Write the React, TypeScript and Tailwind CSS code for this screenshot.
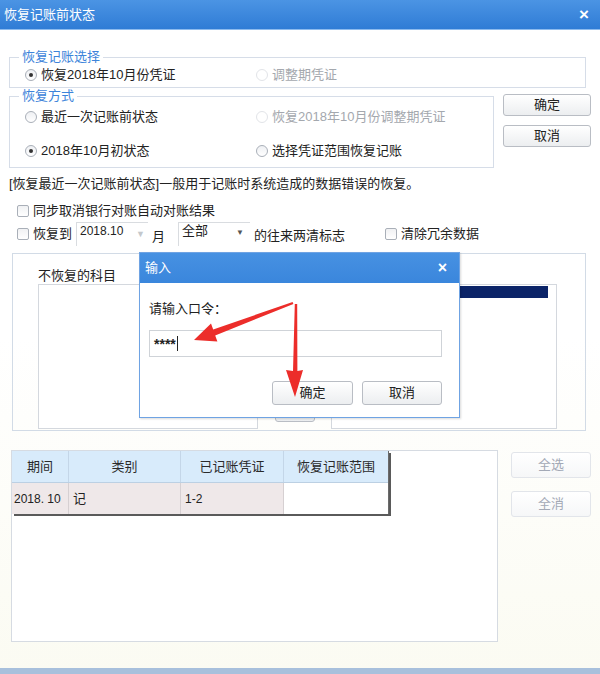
import React from "react";

function Radio({ checked, disabled, label }: { checked?: boolean; disabled?: boolean; label: string }) {
  return (
    <div className="flex items-center gap-[4px] h-[20px]">
      <span
        className={`w-[12px] h-[12px] rounded-full border flex items-center justify-center ${
          disabled ? "border-[#e2e4e8] bg-white" : "border-[#a9afb8] bg-gradient-to-b from-[#eef0f3] to-white"
        }`}
      >
        {checked && <span className="w-[4px] h-[4px] rounded-full bg-[#333]" />}
      </span>
      <span className={disabled ? "text-[#a4a8ae]" : "text-[#222]"}>{label}</span>
    </div>
  );
}

function Check({ label }: { label?: string }) {
  return (
    <div className="flex items-center gap-[4px]">
      <span className="w-[12px] h-[12px] rounded-[2px] border border-[#a9afb8] bg-gradient-to-b from-[#f0f1f3] to-white" />
      {label && <span>{label}</span>}
    </div>
  );
}

function Btn({ children, className = "" }: { children: React.ReactNode; className?: string }) {
  return (
    <div
      className={`flex items-center justify-center rounded-[3px] border border-[#b9bdc4] bg-gradient-to-b from-white to-[#eceef0] text-[#222] ${className}`}
    >
      {children}
    </div>
  );
}

export default function App() {
  return (
    <div className="relative w-[600px] h-[674px] overflow-hidden flex flex-col bg-gradient-to-b from-white via-white to-[#fbfbf2] text-[13px] leading-[18px] text-[#222] font-['Liberation_Sans','Noto_Sans_CJK_SC',sans-serif]">
      {/* title bar */}
      <div className="h-[30px] shrink-0 flex items-center justify-between pl-[4px] pr-[11px] bg-gradient-to-b from-[#4b94e4] to-[#2f7cd5] border-b border-[#8dbbee] text-white">
        <span>恢复记账前状态</span>
        <span className="text-[17px] font-bold">×</span>
      </div>

      <div className="flex-1 flex flex-col px-[9px]">
        {/* 恢复记账选择 */}
        <fieldset className="mt-[19px] w-[577px] border border-[#d6dde8] pb-[2px]">
          <legend className="ml-[9px] px-[3px] leading-[16px] text-[#3d84da]">恢复记账选择</legend>
          <div className="grid grid-cols-[231px_1fr] pl-[15px]">
            <Radio checked label="恢复2018年10月份凭证" />
            <Radio disabled label="调整期凭证" />
          </div>
        </fieldset>

        <div className="flex items-start">
          <fieldset className="w-[485px] border border-[#d6dde8] pt-[3px] pb-[6px]">
            <legend className="ml-[9px] px-[3px] leading-[16px] text-[#3d84da]">恢复方式</legend>
            <div className="grid grid-cols-[231px_1fr] gap-y-[14px] pl-[15px]">
              <Radio label="最近一次记账前状态" />
              <Radio disabled label="恢复2018年10月份调整期凭证" />
              <Radio checked label="2018年10月初状态" />
              <Radio label="选择凭证范围恢复记账" />
            </div>
          </fieldset>
          <div className="ml-[9px] mt-[6px] flex flex-col gap-[9px]">
            <Btn className="w-[88px] h-[22px]">确定</Btn>
            <Btn className="w-[88px] h-[22px]">取消</Btn>
          </div>
        </div>

        <div className="mt-[7px]">[恢复最近一次记账前状态]一般用于记账时系统造成的数据错误的恢复。</div>

        <div className="mt-[9px] pl-[8px]">
          <Check label="同步取消银行对账自动对账结果" />
        </div>

        <div className="mt-[2px] pl-[8px] flex items-center h-[24px]">
          <Check label="恢复到" />
          <div className="ml-[4px] w-[72px] h-[24px] border-l border-t border-[#d9dce0] bg-white flex justify-between px-[3px] text-[12px] leading-[16px]">
            <span>2018.10</span>
            <span className="text-[#c4c8cc] text-[9px] mt-[3px]">▼</span>
          </div>
          <span className="ml-[4px] mt-[6px]">月</span>
          <div className="ml-[13px] w-[72px] h-[24px] border-l border-t border-[#d9dce0] bg-white flex justify-between px-[3px] leading-[16px]">
            <span>全部</span>
            <span className="text-[#555] text-[8px] mt-[2px] mr-[3px]">▼</span>
          </div>
          <span className="ml-[4px] mt-[4px]">的往来两清标志</span>
          <div className="ml-[40px]">
            <Check label="清除冗余数据" />
          </div>
        </div>

        {/* subjects panel */}
        <div className="mt-[7px] ml-[3px] w-[574px] h-[178px] border border-[#d2dbe6] flex pl-[25px] pt-[13px]">
          <div className="flex flex-col">
            <span className="leading-[17px]">不恢复的科目</span>
            <div className="w-[220px] h-[145px] border border-[#d4d8de] bg-white" />
          </div>
          <div className="w-[73px] flex flex-col justify-end items-center pb-[8px]">
            <Btn className="w-[40px] h-[24px]"> </Btn>
          </div>
          <div className="flex flex-col">
            <span className="leading-[17px]">恢复的科目</span>
            <div className="w-[226px] h-[145px] border border-[#d4d8de] bg-white pt-[1px] pl-[1px] pr-[8px]">
              <div className="h-[12px] bg-[#0b2468]" />
            </div>
          </div>
        </div>

        {/* table section */}
        <div className="mt-[19px] flex items-start">
          <div className="ml-[2px] w-[487px] h-[192px] border border-[#d6dbe2] bg-white">
            <div className="w-[377px] shadow-[2px_2px_0_#5a5a5a] border-r border-[#6b6b6b]">
              <div className="grid grid-cols-[57px_112px_103px_104px] h-[32px] bg-[#d8ebfb] border-b border-[#bcd0e3] text-[#2a2a2a]">
                <div className="flex items-center justify-center border-r border-[#c4d6e8]">期间</div>
                <div className="flex items-center justify-center border-r border-[#c4d6e8]">类别</div>
                <div className="flex items-center justify-center border-r border-[#c4d6e8]">已记账凭证</div>
                <div className="flex items-center justify-center">恢复记账范围</div>
              </div>
              <div className="grid grid-cols-[57px_112px_103px_104px] h-[31px] text-[12px]">
                <div className="flex items-center pl-[2px] bg-[#efe8e9] border-r border-[#d6d0d2] whitespace-nowrap">2018. 10</div>
                <div className="flex items-center pl-[4px] bg-[#efe8e9] border-r border-[#d6d0d2] text-[13px]">记</div>
                <div className="flex items-center pl-[4px] bg-[#efe8e9] border-r border-[#d6d0d2]">1-2</div>
                <div className="bg-white" />
              </div>
            </div>
          </div>
          <div className="ml-[13px] mt-[2px] flex flex-col gap-[13px]">
            <div className="w-[80px] h-[26px] rounded-[3px] border border-[#e2e5ea] bg-gradient-to-b from-white to-[#f6f7f8] flex items-center justify-center text-[#a3a9b6]">全选</div>
            <div className="w-[80px] h-[26px] rounded-[3px] border border-[#e2e5ea] bg-gradient-to-b from-white to-[#f6f7f8] flex items-center justify-center text-[#a3a9b6]">全消</div>
          </div>
        </div>
      </div>

      <div className="h-[6px] shrink-0 bg-[#a8c0dc]" />

      {/* password dialog */}
      <div className="absolute left-[139px] top-[252px] w-[321px] h-[166px] border border-[#6fa3e3] bg-white flex flex-col shadow-[1px_1px_2px_rgba(0,0,0,0.15)]">
        <div className="h-[30px] shrink-0 flex items-center justify-between pl-[5px] pr-[12px] bg-gradient-to-b from-[#4791e2] to-[#3a86dc] text-white">
          <span>输入</span>
          <span className="text-[16px] font-bold">×</span>
        </div>
        <div className="flex flex-col px-[9px]">
          <span className="mt-[17px]">请输入口令：</span>
          <div className="mt-[12px] w-[293px] h-[27px] border border-[#cfd3d8] flex items-center pl-[4px] text-[14px]">
            <span className="font-bold">****</span>
            <span className="ml-[1px] w-[1px] h-[15px] bg-[#222]" />
          </div>
          <div className="mt-[24px] flex justify-end gap-[9px] pr-[8px]">
            <Btn className="w-[81px] h-[24px]">确定</Btn>
            <Btn className="w-[80px] h-[24px]">取消</Btn>
          </div>
        </div>
      </div>

      {/* red annotation arrows */}
      <svg className="absolute left-0 top-0 pointer-events-none" width="600" height="674" viewBox="0 0 600 674">
        <polygon
          fill="#ec2d2a"
          points="292.6,301.9 213.2,329.6 211,323.6 194,340 217.4,341.4 215.2,335.4 293.4,304.1"
        />
        <polygon fill="#ec2d2a" points="294.8,304 293,371 286,370 295,397 303,370 297.4,371 297.2,304" />
      </svg>
    </div>
  );
}
